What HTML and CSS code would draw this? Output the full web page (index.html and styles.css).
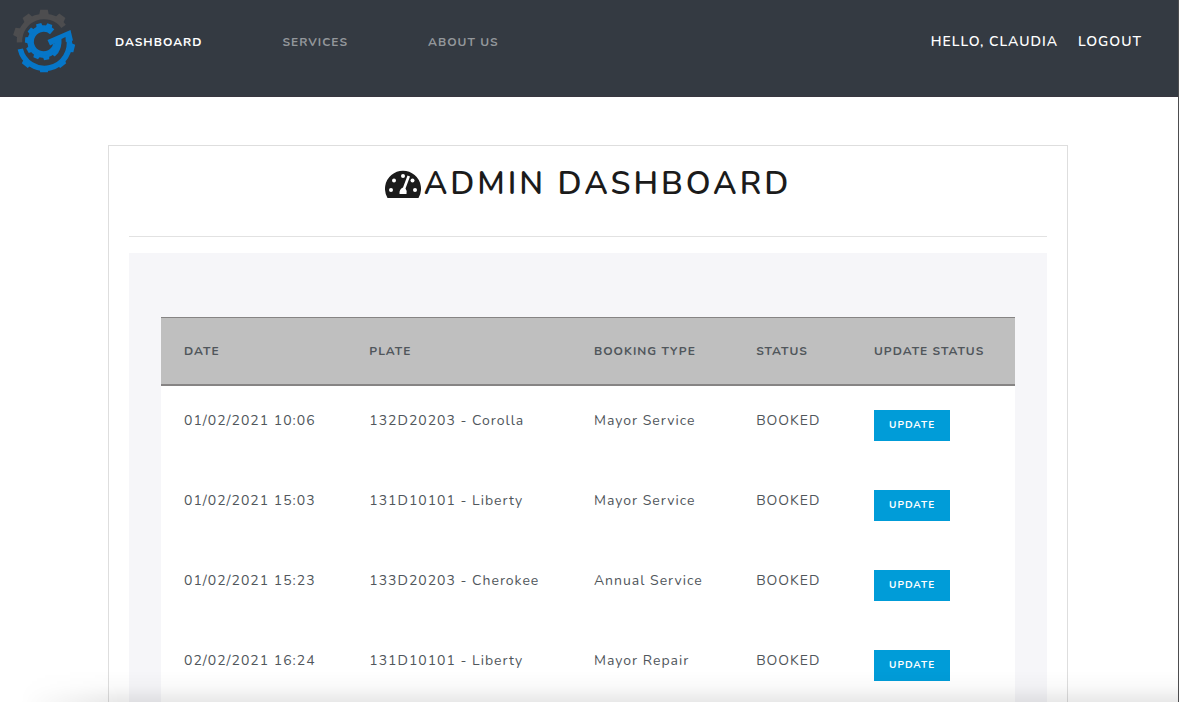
FILE: index.html
```html
<!DOCTYPE html>
<html lang="en">
<head>
<meta charset="utf-8">
<title>Admin Dashboard</title>
<link rel="stylesheet" href="styles.css">
</head>
<body>
<header class="topbar">
  <a class="brand" href="#" aria-label="Home">
    <svg class="logo" viewBox="0 0 64 64" aria-hidden="true">
      <defs>
        <path id="tooth" d="M-5 -25L-3.800 -31.200H3.800L5 -25Z"/>
        <path id="cog" d="M-3.400 -14L-2.600 -18.500H2.600L3.400 -14Z"/>
      </defs>
      <path d="M7.500 33.300A24.500 24.500 0 0 1 51.600 17.300" fill="none" stroke="#4d4d4f" stroke-width="5.500"/>
      <g fill="#4d4d4f" transform="translate(32 32)">
        <use href="#tooth" transform="rotate(-72)"/>
        <use href="#tooth" transform="rotate(-36)"/>
        <use href="#tooth"/>
        <use href="#tooth" transform="rotate(36)"/>
      </g>
      <g fill="none" stroke="#0676c8">
        <path d="M8.300 40A24.500 24.500 0 0 0 56.800 29" stroke-width="5.500"/>
        <path d="M40.200 22.800A13 13 0 1 0 44.300 35.500" stroke-width="6.500"/>
      </g>
      <g fill="#0676c8">
        <g transform="translate(32 32)">
          <use href="#tooth" transform="rotate(104)"/>
          <use href="#tooth" transform="rotate(142)"/>
          <use href="#tooth" transform="rotate(180)"/>
          <use href="#tooth" transform="rotate(218)"/>
        </g>
        <g transform="translate(31.500 32.500)">
          <use href="#cog" transform="rotate(20)"/>
          <use href="#cog" transform="rotate(-15)"/>
          <use href="#cog" transform="rotate(-50)"/>
          <use href="#cog" transform="rotate(-85)"/>
          <use href="#cog" transform="rotate(-120)"/>
          <use href="#cog" transform="rotate(-155)"/>
          <use href="#cog" transform="rotate(170)"/>
          <use href="#cog" transform="rotate(135)"/>
        </g>
        <path d="M35.500 31L58.500 21L61 31.500L53.800 33L53.500 28L49.500 30Q50 38 46 44L40 40L42.500 34.500L38 36.500Z"/>
      </g>
    </svg>
  </a>
  <nav class="nav" aria-label="Main">
    <a class="nav-link active" href="#">DASHBOARD</a>
    <a class="nav-link" href="#">SERVICES</a>
    <a class="nav-link" href="#">ABOUT US</a>
  </nav>
  <div class="account">
    <a href="#">HELLO, CLAUDIA</a>
    <a href="#">LOGOUT</a>
  </div>
</header>
<main class="content">
  <section class="card">
    <h1 class="title">
      <svg class="gauge" viewBox="0 0 36 28" aria-hidden="true">
        <path d="M2.500 28A18 18 0 1 1 33.500 28Z" fill="#1b1b1b"/>
        <g fill="#fff">
          <circle cx="6" cy="20" r="2"/><circle cx="9" cy="10.500" r="2"/>
          <circle cx="18" cy="6" r="2"/><circle cx="27.500" cy="10.500" r="2"/><circle cx="30" cy="20" r="2"/>
          <path d="M22.500 5.500L25 6.500L20.500 18.500Q22 20 21.500 24H14.500Q14 19 18 17.500Z"/>
        </g>
      </svg>ADMIN DASHBOARD</h1>
    <div class="panel">
      <table class="bookings">
        <thead>
          <tr><th class="c-date">DATE</th><th class="c-plate">PLATE</th><th class="c-type">BOOKING TYPE</th><th class="c-status">STATUS</th><th>UPDATE STATUS</th></tr>
        </thead>
        <tbody>
          <tr><td>01/02/2021 10:06</td><td>132D20203 - Corolla</td><td>Mayor Service</td><td>BOOKED</td><td><button class="update">UPDATE</button></td></tr>
          <tr><td>01/02/2021 15:03</td><td>131D10101 - Liberty</td><td>Mayor Service</td><td>BOOKED</td><td><button class="update">UPDATE</button></td></tr>
          <tr><td>01/02/2021 15:23</td><td>133D20203 - Cherokee</td><td>Annual Service</td><td>BOOKED</td><td><button class="update">UPDATE</button></td></tr>
          <tr><td>02/02/2021 16:24</td><td>131D10101 - Liberty</td><td>Mayor Repair</td><td>BOOKED</td><td><button class="update">UPDATE</button></td></tr>
        </tbody>
      </table>
    </div>
  </section>
</main>
<div class="fade"></div>
</body>
</html>
```
FILE: styles.css
```css
* { box-sizing: border-box; }
body {
  margin: 0;
  height: 100vh;
  display: flex;
  flex-direction: column;
  overflow: hidden;
  border-right: 1px solid #4d4d4f;
  background: #fff;
  color: #50565b;
  font-family: Nunito, Lato, "Open Sans", sans-serif;
  letter-spacing: 1px;
}
a { text-decoration: none; color: inherit; }
.topbar {
  display: flex;
  align-items: flex-start;
  flex-shrink: 0;
  height: 97px;
  padding: 9px 36px 0 12px;
  background: #343a42;
  border-bottom: 1px solid #38363f;
}
.brand, .logo { display: block; width: 64px; height: 64px; }
.nav {
  display: flex;
  gap: 80px;
  margin-left: 39px;
  font-size: 12px;
  font-weight: 700;
  line-height: 66px;
}
.nav-link { color: #93979b; }
.nav-link.active { color: #fff; }
.account {
  display: flex;
  gap: 20px;
  margin-left: auto;
  color: #fff;
  font-size: 14px;
  font-weight: 600;
  line-height: 66px;
}
.content {
  flex: 1;
  min-height: 0;
  overflow-y: auto;
  scrollbar-width: none;
  padding: 48px 2px 0 0;
}
.card {
  max-width: 960px;
  margin: 0 auto;
  padding: 0 20px;
  border: 1px solid #dedede;
}
.title {
  display: flex;
  justify-content: center;
  align-items: center;
  gap: 3px;
  margin: 0 0 16px;
  padding: 16px 0 30px;
  border-bottom: 1px solid #e2e2e2;
  color: #1b1b1b;
  font-size: 32px;
  font-weight: 600;
  line-height: 44px;
  letter-spacing: 3px;
}
.gauge { width: 36px; height: 28px; }
.panel { padding: 64px 32px; background: #f6f6f9; }
.bookings {
  width: 100%;
  table-layout: fixed;
  border-collapse: separate;
  border-spacing: 0;
  background: #fff;
}
.c-date { width: 21.7%; }
.c-plate { width: 26.3%; }
.c-type { width: 19%; }
.c-status { width: 13.8%; }
th {
  height: 69px;
  padding: 0 0 0 23px;
  border-top: 1px solid #868484;
  border-bottom: 2px solid #868484;
  background: #bfbfbf;
  font-size: 12px;
  font-weight: 700;
  text-align: left;
  white-space: nowrap;
}
td {
  height: 80px;
  padding: 24px 0 0 23px;
  font-size: 14px;
  line-height: 21px;
  vertical-align: top;
  white-space: nowrap;
}
.update {
  display: block;
  height: 31px;
  padding: 0 15px;
  border: 0;
  background: #009cd8;
  color: #fff;
  font: inherit;
  font-size: 10px;
  font-weight: 700;
  letter-spacing: 1px;
}
.fade {
  position: fixed;
  right: 1px;
  bottom: 0;
  left: 0;
  height: 32px;
  background: linear-gradient(to bottom, rgba(0, 0, 0, 0), rgba(0, 0, 0, 0.02) 50%, rgba(0, 0, 0, 0.09));
  -webkit-mask-image: linear-gradient(to right, transparent 20px, #000 120px);
  mask-image: linear-gradient(to right, transparent 20px, #000 120px);
  pointer-events: none;
}
```
